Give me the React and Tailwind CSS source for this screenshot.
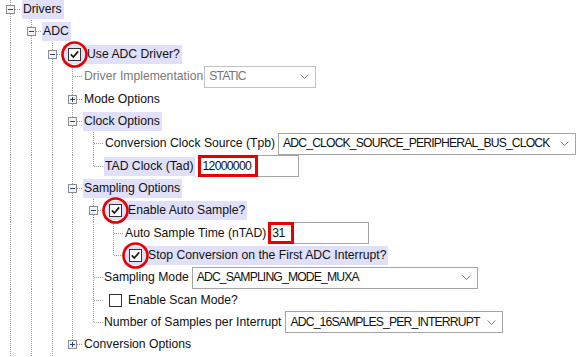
import React from "react";

const W = [21, 20, 21, 20, 21, 20];
const LX = [10, 10, 11, 10, 11, 10];
const LINE = "#9c9c9c";

function Cell({ i, h, kind, box }) {
  const w = W[i];
  const lx = LX[i];
  const x = lx + 0.5;
  const my = Math.floor(h / 2);
  const cy = my + 0.5;
  const parts = [];
  const vl = (y1, y2, k) => (
    <line key={k} x1={x} y1={y1} x2={x} y2={y2} stroke={LINE} strokeDasharray="1 1" />
  );
  const hl = (x1, k) => (
    <line key={k} x1={x1} y1={cy} x2={w} y2={cy} stroke={LINE} strokeDasharray="1 1" />
  );
  if (box) {
    parts.push(vl(0, my - 4, "a"));
    if (kind === "tee") parts.push(vl(my + 5, h, "b"));
    parts.push(hl(lx + 5, "h"));
    parts.push(
      <rect key="r" x={lx - 3.5} y={my - 3.5} width={8} height={8} fill="#f6f6f6" stroke="#8c8c8c" />
    );
    parts.push(<rect key="m" x={lx - 2} y={my} width={5} height={1} fill="#24408f" />);
    if (box === "plus")
      parts.push(<rect key="p" x={lx} y={my - 2} width={1} height={5} fill="#24408f" />);
  } else {
    if (kind === "line" || kind === "tee") parts.push(vl(0, h, "a"));
    if (kind === "corner") parts.push(vl(0, cy, "a"));
    if (kind === "tee" || kind === "corner") parts.push(hl(lx + 1, "h"));
  }
  return (
    <svg width={w} height={h} className="block shrink-0" shapeRendering="crispEdges">
      {parts}
    </svg>
  );
}

function Row({ h, cells, children }) {
  return (
    <div className={h === 23 ? "flex h-[23px] items-center" : "flex h-[22px] items-center"}>
      {cells.map((c, i) => (
        <Cell key={i} i={i} h={h} kind={c[0]} box={c[1]} />
      ))}
      <div className="flex items-center">{children}</div>
    </div>
  );
}

function Check({ checked, circled }) {
  return (
    <span className="relative flex h-[13px] w-[13px] shrink-0">
      <svg width="13" height="13" viewBox="0 0 13 13" className="block">
        <rect x="0.5" y="0.5" width="12" height="12" fill="#fff" stroke="#333" />
        {checked && (
          <path d="M2.8 6.4 L5.3 9 L10.2 3.4" fill="none" stroke="#1a1a1a" strokeWidth="1.7" />
        )}
      </svg>
      {circled && (
        <svg className="absolute left-[-7px] top-[-7px]" width="27" height="27">
          <circle cx="13.5" cy="13.5" r="12" fill="none" stroke="#e60000" strokeWidth="2.6" />
        </svg>
      )}
    </span>
  );
}

function Chevron() {
  return (
    <svg width="9" height="5" viewBox="0 0 9 5" className="block shrink-0">
      <polyline points="0.5,0.5 4.5,4.5 8.5,0.5" fill="none" stroke="#7d7d7d" strokeWidth="1" />
    </svg>
  );
}

function Combo({ value, className, disabled }) {
  return (
    <div
      className={
        "flex h-[22px] shrink-0 items-center justify-between border bg-white pl-[4px] pr-[6px] " +
        (disabled ? "border-[#c2c2c2] text-[#767676] " : "border-[#a5a5a5] ") +
        className
      }
    >
      <span className="tracking-[-0.85px]">{value}</span>
      <Chevron />
    </div>
  );
}

function Field({ value, className, redClass }) {
  return (
    <div
      className={
        "relative flex h-[22px] shrink-0 items-center border border-[#a5a5a5] bg-white pl-[3px] " +
        className
      }
    >
      <span className="tracking-[-0.7px]">{value}</span>
      <span
        className={
          "absolute bottom-[-1px] left-[-1px] top-[-1px] border-[3px] border-[#e60000] " + redClass
        }
      />
    </div>
  );
}

const L = "line";
const T = "tee";
const C = "corner";

function Hi({ children }) {
  return (
    <span className="ml-[1px] flex h-[19px] items-center bg-[#e0e0fa] pl-[1px] pr-[2px]">
      {children}
    </span>
  );
}

function HiCheck({ children }) {
  return (
    <span className="ml-[1px] flex h-[19px] items-center bg-[#e0e0fa] pl-[5px] pr-[2px]">
      <Check checked circled />
      <span className="ml-[6px]">{children}</span>
    </span>
  );
}

export default function App() {
  return (
    <div
      className="h-[357px] w-[586px] overflow-hidden bg-white text-[12.2px] leading-none text-[#111]"
      style={{ fontFamily: '"Liberation Sans", Arial, sans-serif' }}
    >
      <div className="mt-[-2px] flex flex-col">
        <Row h={22} cells={[[T, "minus"]]}>
          <Hi>Drivers</Hi>
        </Row>
        <Row h={23} cells={[[L], [T, "minus"]]}>
          <Hi>ADC</Hi>
        </Row>
        <Row h={22} cells={[[L], [L], [T, "minus"]]}>
          <HiCheck>Use ADC Driver?</HiCheck>
        </Row>
        <Row h={23} cells={[[L], [L], [L], [T]]}>
          <span className="ml-[2px] text-[#7a7a7a]">Driver Implementation</span>
          <Combo value="STATIC" disabled className="ml-[1px] w-[112px]" />
        </Row>
        <Row h={22} cells={[[L], [L], [L], [T, "plus"]]}>
          <span className="ml-[2px]">Mode Options</span>
        </Row>
        <Row h={22} cells={[[L], [L], [L], [T, "minus"]]}>
          <Hi>Clock Options</Hi>
        </Row>
        <Row h={23} cells={[[L], [L], [L], [L], [T]]}>
          <span className="ml-[2px]">Conversion Clock Source (Tpb)</span>
          <Combo value="ADC_CLOCK_SOURCE_PERIPHERAL_BUS_CLOCK" className="ml-[3px] w-[298px]" />
        </Row>
        <Row h={22} cells={[[L], [L], [L], [L], [C]]}>
          <span className="ml-[1px] flex h-[19px] items-center bg-[#e0e0fa] pl-[1px] pr-[2px]">
            TAD Clock (Tad)
          </span>
          <Field value="12000000" className="ml-[3px] w-[101px]" redClass="w-[60px]" />
        </Row>
        <Row h={22} cells={[[L], [L], [L], [T, "minus"]]}>
          <Hi>Sampling Options</Hi>
        </Row>
        <Row h={23} cells={[[L], [L], [L], [L], [T, "minus"]]}>
          <HiCheck>Enable Auto Sample?</HiCheck>
        </Row>
        <Row h={22} cells={[[L], [L], [L], [L], [L], [T]]}>
          <span className="ml-[2px]">Auto Sample Time (nTAD)</span>
          <Field value="31" className="ml-[2px] w-[101px]" redClass="w-[26px]" />
        </Row>
        <Row h={22} cells={[[L], [L], [L], [L], [L], [C]]}>
          <HiCheck>Stop Conversion on the First ADC Interrupt?</HiCheck>
        </Row>
        <Row h={23} cells={[[L], [L], [L], [L], [T]]}>
          <span className="ml-[1px]">Sampling Mode</span>
          <Combo value="ADC_SAMPLING_MODE_MUXA" className="ml-[3px] w-[286px]" />
        </Row>
        <Row h={22} cells={[[L], [L], [L], [L], [T]]}>
          <span className="ml-[6px] flex items-center">
            <Check />
            <span className="ml-[6px]">Enable Scan Mode?</span>
          </span>
        </Row>
        <Row h={22} cells={[[L], [L], [L], [L], [C]]}>
          <span className="ml-[1px]">Number of Samples per Interrupt</span>
          <Combo value="ADC_16SAMPLES_PER_INTERRUPT" className="ml-[4px] w-[218px]" />
        </Row>
        <Row h={23} cells={[[L], [L], [L], [C, "plus"]]}>
          <span className="ml-[2px]">Conversion Options</span>
        </Row>
      </div>
    </div>
  );
}
